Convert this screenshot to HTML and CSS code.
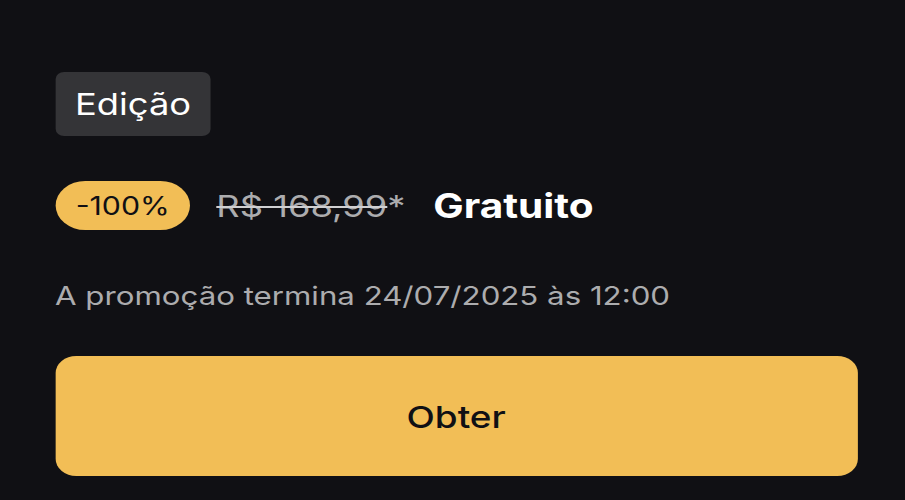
FILE: index.html
```html
<!DOCTYPE html>
<html lang="pt-BR">
<head>
<meta charset="utf-8">
<link rel="stylesheet" href="styles.css">
</head>
<body>
<main class="panel">
  <div class="tag">Edição</div>
  <div class="price-row">
    <span class="discount">-100%</span>
    <span class="old-price"><s>R$ 168,99</s>*</span>
    <span class="new-price">Gratuito</span>
  </div>
  <p class="promo">A promoção termina 24/07/2025 às 12:00</p>
  <button class="cta">Obter</button>
</main>
</body>
</html>
```
FILE: styles.css
```css
html, body {
  margin: 0;
  padding: 0;
  background: #101014;
  height: 100%;
  overflow: hidden;
}
body {
  font-family: Inter, "Noto Sans", sans-serif;
  color: #fff;
}
.panel {
  width: 663px;
  padding: 72px 0 0 45.5px;
  display: flex;
  flex-direction: column;
  align-items: flex-start;
  transform: scaleX(1.21);
  transform-origin: 0 0;
}
.tag {
  background: #343437;
  border-radius: 7px;
  height: 64px;
  padding: 0 16.5px;
  display: flex;
  align-items: center;
  font-size: 30px;
  color: #fff;
}
.price-row {
  margin-top: 45px;
  display: flex;
  align-items: center;
  height: 49px;
}
.discount {
  background: #f2be56;
  color: #101014;
  border-radius: 25px;
  height: 49px;
  padding: 0 17px;
  display: flex;
  align-items: center;
  font-size: 25px;
}
.old-price {
  margin-left: 21.5px;
  color: #acacae;
  font-size: 30px;
}
.old-price s {
  text-decoration-thickness: 2px;
  text-decoration-color: #d0d0d2;
}
.new-price {
  margin-left: 23px;
  font-size: 33.5px;
  font-weight: 700;
  color: #fff;
}
.promo {
  margin: 48px 0 0;
  font-size: 25.8px;
  color: #acacae;
  line-height: 36px;
}
.cta {
  margin-top: 42px;
  width: 663px;
  height: 120px;
  border: none;
  border-radius: 17px;
  background: #f2be56;
  color: #101014;
  font-family: inherit;
  font-size: 30.5px;
  font-weight: 500;
}
```
